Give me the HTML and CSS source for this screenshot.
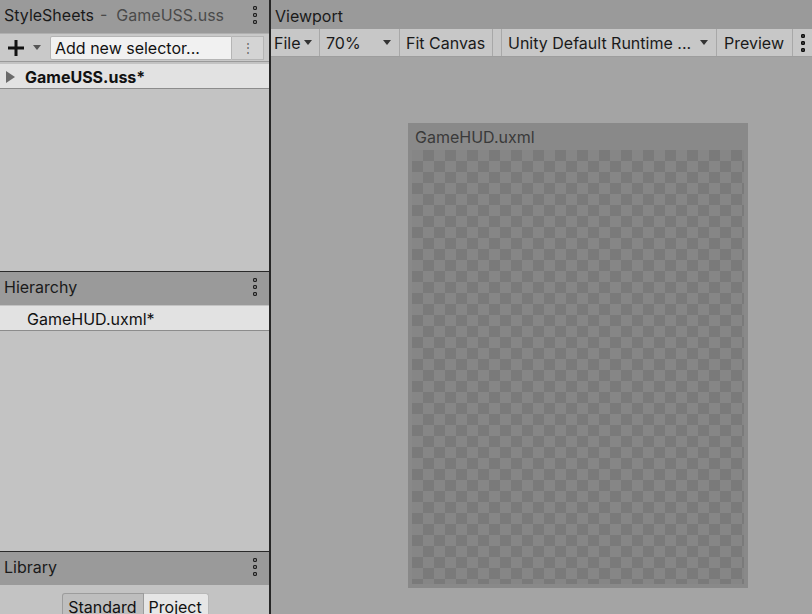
FILE: index.html
```html
<!DOCTYPE html>
<html>
<head>
<meta charset="utf-8">
<link rel="stylesheet" href="styles.css">
</head>
<body>
<div class="app">
  <div class="left">
    <section class="pane sheets">
      <div class="pane-head">
        <span class="title">StyleSheets</span><span class="sub">-&nbsp; GameUSS.uss</span>
        <span class="kebab"><i></i><i></i><i></i></span>
      </div>
      <div class="sel-toolbar">
        <span class="plus">
          <svg width="18" height="18" viewBox="0 0 18 18"><path d="M9 1v16M1 9h16" stroke="#111" stroke-width="3"/></svg>
        </span>
        <span class="caret small"></span>
        <span class="field">Add new selector...</span>
        <span class="field-btn">⋮</span>
      </div>
      <div class="row bold"><span class="tri"></span>GameUSS.uss*</div>
      <div class="fill"></div>
    </section>
    <section class="pane hier">
      <div class="pane-head">
        <span class="title">Hierarchy</span>
        <span class="kebab"><i></i><i></i><i></i></span>
      </div>
      <div class="row indent">GameHUD.uxml*</div>
      <div class="fill"></div>
    </section>
    <section class="pane lib">
      <div class="pane-head">
        <span class="title">Library</span>
        <span class="kebab"><i></i><i></i><i></i></span>
      </div>
      <div class="tabs">
        <span class="tab on">Standard</span><span class="tab">Project</span>
      </div>
    </section>
  </div>
  <div class="right">
    <div class="vp-head"><span class="title">Viewport</span></div>
    <div class="vp-toolbar">
      <span class="tb file">File<span class="caret"></span></span>
      <span class="tb zoom">70%<span class="caret"></span></span>
      <span class="tb fit">Fit Canvas</span>
      <span class="tb-gap"></span>
      <span class="tb theme">Unity Default Runtime ...<span class="caret"></span></span>
      <span class="tb preview">Preview</span>
      <span class="tb more"><span class="kebab dark"><i></i><i></i><i></i></span></span>
    </div>
    <div class="stage">
      <div class="canvas">
        <div class="canvas-title">GameHUD.uxml</div>
        <div class="checker"></div>
      </div>
    </div>
  </div>
</div>
</body>
</html>
```

FILE: styles.css
```css
* { box-sizing: border-box; }
html, body { margin: 0; padding: 0; }
body {
  width: 812px;
  height: 614px;
  overflow: hidden;
  font-family: Inter, "Noto Sans", sans-serif;
  font-size: 16px;
  color: #111;
  background: #a4a4a4;
}
.app { display: flex; height: 614px; }

.left {
  width: 271px;
  flex: none;
  display: flex;
  flex-direction: column;
  border-right: 2px solid #262626;
  overflow: hidden;
}
.pane { display: flex; flex-direction: column; background: #c3c3c3; }
.sheets { height: 272px; flex: none; border-bottom: 1px solid #2a2a2a; }
.hier { height: 280px; flex: none; border-bottom: 1px solid #2a2a2a; }
.lib { flex: 1; min-height: 0; overflow: hidden; }

.pane-head {
  height: 33px;
  flex: none;
  background: #9a9a9a;
  display: flex;
  align-items: center;
  padding-left: 4px;
  padding-right: 12px;
  padding-bottom: 3px;
  color: #1c1c1c;
}
.pane-head .title { color: #1a1a1a; }
.pane-head .sub { color: #4a4a4a; margin-left: 6px; }
.kebab {
  margin-left: auto;
  display: flex;
  flex-direction: column;
  gap: 3px;
}
.kebab i {
  display: block;
  width: 4px;
  height: 4px;
  border: 1px solid #222;
  border-radius: 1px;
  background: #777;
}

.sel-toolbar {
  height: 29px;
  flex: none;
  display: flex;
  align-items: center;
  background: #c9c9c9;
  border-top: 1px solid #b0b0b0;
  border-bottom: 1px solid #9a9a9a;
  padding-left: 7px;
  padding-right: 4px;
}
.plus { display: flex; width: 20px; height: 18px; align-items: center; }
.caret {
  display: inline-block;
  width: 0; height: 0;
  border-left: 4.5px solid transparent;
  border-right: 4.5px solid transparent;
  border-top: 5px solid #333;
  margin-left: 4px;
}
.caret.small { margin-left: 6px; margin-right: 9px; border-top-color: #555; }
.field {
  width: 182px;
  height: 24px;
  background: #f1f1f1;
  border: 1px solid #b5b5b5;
  border-radius: 2px 0 0 2px;
  padding-left: 4px;
  line-height: 22px;
  color: #111;
}
.field-btn {
  width: 32px;
  height: 24px;
  background: #d4d4d4;
  border: 1px solid #b5b5b5;
  border-left: none;
  text-align: center;
  line-height: 22px;
  font-size: 12px;
  color: #666;
}

.row {
  height: 25px;
  flex: none;
  display: flex;
  align-items: center;
  background: #e2e2e2;
  border-bottom: 1px solid #8c8c8c;
  margin-top: 2px;
  padding-left: 6px;
  padding-top: 1px;
}
.row.bold { font-weight: 700; padding-left: 6px; }
.row.indent { padding-left: 27px; margin-top: 1px; padding-top: 2px; }
.tri {
  width: 0; height: 0;
  border-top: 6px solid transparent;
  border-bottom: 6px solid transparent;
  border-left: 9px solid #6b6b6b;
  margin-right: 10px;
}
.fill { flex: 1; }

.tabs {
  display: flex;
  justify-content: center;
  padding-top: 8px;
  padding-left: 2px;
}
.tab {
  height: 24px;
  padding: 3px 6px 0 5px;
  background: #e6e6e6;
  border: 1px solid #b8b8b8;
  border-bottom: none;
  color: #111;
  flex: none;
}
.tab.on { background: #bebebe; border-color: #9c9c9c; border-radius: 3px 0 0 0; }
.tab:last-child { border-radius: 0 3px 0 0; border-left: none; padding-left: 5px; }

.right { flex: 1; display: flex; flex-direction: column; }
.vp-head {
  height: 29px;
  flex: none;
  background: #9a9a9a;
  display: flex;
  align-items: center;
  padding-left: 4px;
  padding-top: 2px;
  color: #1a1a1a;
}
.vp-toolbar {
  height: 28px;
  flex: none;
  display: flex;
  background: #c7c7c7;
  border-bottom: 1px solid #9d9d9d;
}
.tb {
  display: flex;
  align-items: center;
  padding: 0 5px;
  border-right: 1px solid #a8a8a8;
  color: #1a1a1a;
  white-space: nowrap;
}
.tb .caret { margin-left: 3px; }
.tb.file { width: 49px; padding-left: 3px; }
.tb.zoom { width: 80px; padding-left: 6px; }
.tb.zoom .caret { margin-left: auto; margin-right: 3px; }
.tb.fit { width: 93px; padding-left: 6px; }
.tb-gap { width: 9px; border-right: 1px solid #a8a8a8; }
.tb.theme { width: 215px; padding-left: 6px; }
.tb.theme .caret { margin-left: auto; margin-right: 3px; }
.tb.preview { width: 76px; padding-left: 7px; }
.tb.more { border-right: none; padding-left: 8px; }
.kebab.dark i { background: #333; border-color: #111; }

.stage {
  flex: 1;
  background: #a4a4a4;
  padding: 66px 0 0 137px;
}
.canvas {
  width: 340px;
  height: 465px;
  background: #898989;
  display: flex;
  flex-direction: column;
  padding: 0 4px 4px 4px;
}
.canvas-title {
  height: 27px;
  line-height: 26px;
  padding-left: 3px;
  padding-top: 1px;
  color: #3a3a3a;
}
.checker {
  flex: 1;
  background-color: #868686;
  background-image:
    linear-gradient(45deg, #7a7a7a 25%, transparent 25%, transparent 75%, #7a7a7a 75%),
    linear-gradient(45deg, #7a7a7a 25%, transparent 25%, transparent 75%, #7a7a7a 75%);
  background-size: 22px 22px;
  background-position: 0 0, 11px 11px;
}
```
